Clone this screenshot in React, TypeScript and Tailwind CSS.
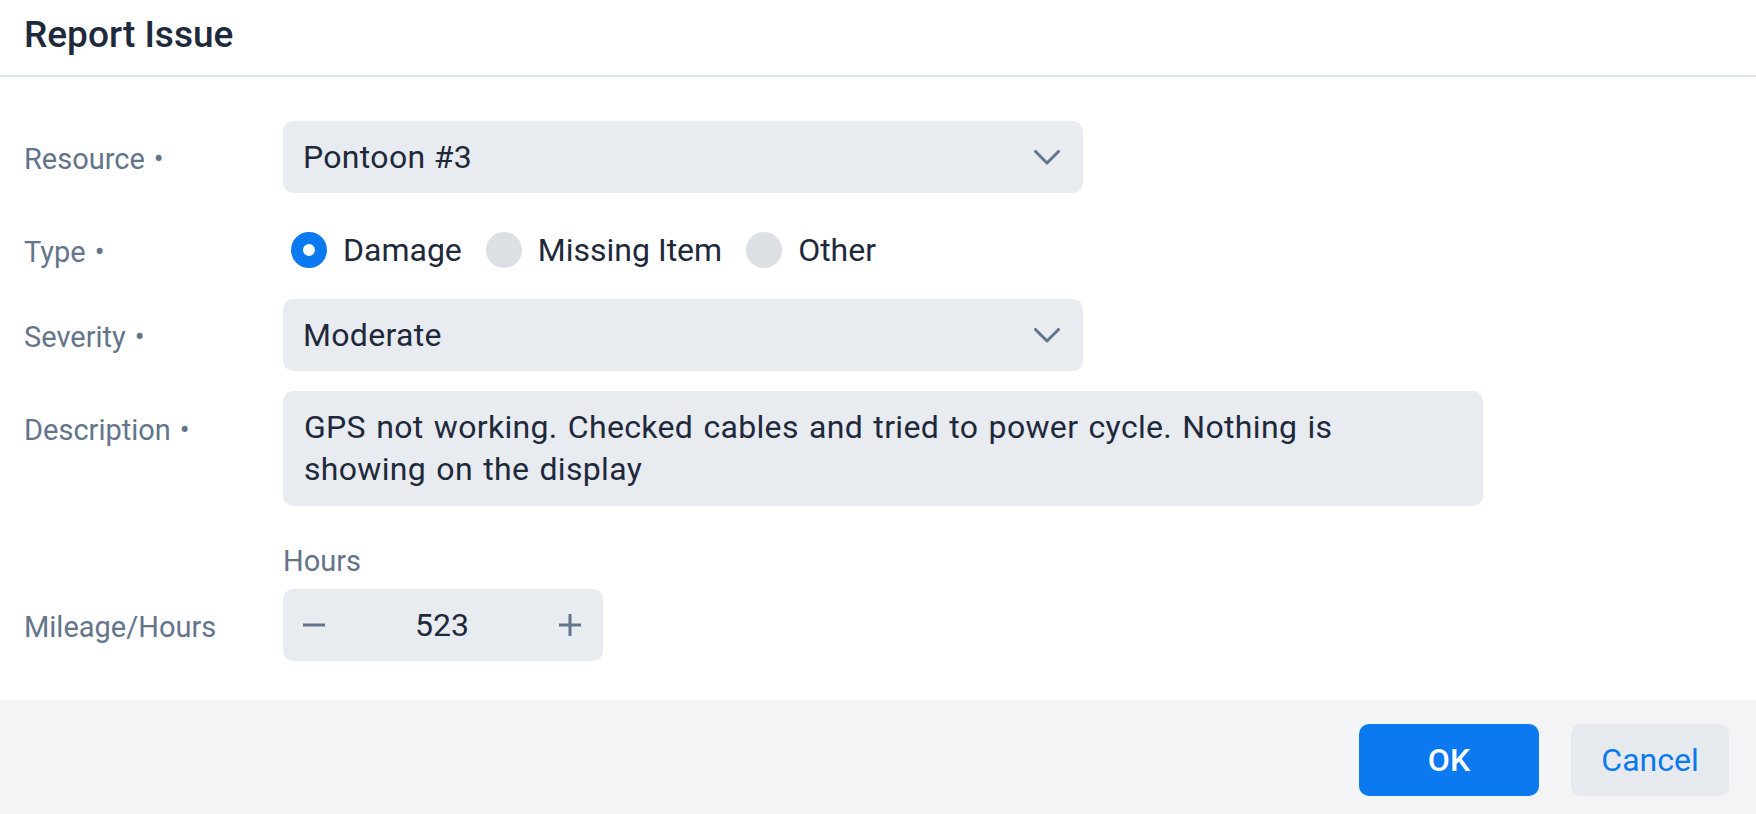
import { useState } from "react";

// Dialog is drawn at 2x (retina) scale to match the reference capture.
const LABEL_W = "w-[259px]";

function Chevron() {
  return (
    <svg width="26" height="15" viewBox="0 0 26 15" fill="none" aria-hidden>
      <path
        d="M1.5 1.5 L13 13 L24.5 1.5"
        stroke="#64748b"
        strokeWidth="3"
        strokeLinecap="round"
        strokeLinejoin="round"
      />
    </svg>
  );
}

function Req() {
  return <span className="ml-[9px]">•</span>;
}

function FieldLabel({ children }: { children: React.ReactNode }) {
  return (
    <div className={`${LABEL_W} shrink-0 pt-1 text-[29px] leading-9 text-[#64748b]`}>
      {children}
    </div>
  );
}

function SelectBox({ value }: { value: string }) {
  return (
    <div className="flex h-[72px] w-[800px] items-center justify-between rounded-[10px] bg-[#e8ebf0] pl-5 pr-[23px]">
      <span className="text-[32px] leading-10 tracking-[0.01em] text-[#1e293b]">{value}</span>
      <Chevron />
    </div>
  );
}

function Radio({ label, checked }: { label: string; checked: boolean }) {
  return (
    <div className="flex items-center gap-4">
      {checked ? (
        <span className="block h-9 w-9 rounded-full border-[12px] border-[#0b79ef] bg-white" />
      ) : (
        <span className="block h-9 w-9 rounded-full bg-[#dce0e5]" />
      )}
      <span className="text-[32px] leading-10 text-[#1e293b]">{label}</span>
    </div>
  );
}

export default function App() {
  const [hours, setHours] = useState(523);

  return (
    <div className="flex h-[814px] flex-col bg-white font-['Roboto','Liberation_Sans',sans-serif]">
      <header className="h-[77px] shrink-0 border-b-2 border-[#e2e6ea] px-6 pt-[16px]">
        <h1 className="text-[37px] font-medium leading-none text-[#1e293b]">Report Issue</h1>
      </header>

      <div className="flex flex-col px-6 pt-[44px]">
        <div className="flex items-center">
          <FieldLabel>
            Resource<Req />
          </FieldLabel>
          <SelectBox value="Pontoon #3" />
        </div>

        <div className="mt-[39px] flex h-9 items-center">
          <FieldLabel>
            Type<Req />
          </FieldLabel>
          <div className="ml-2 flex items-center gap-6">
            <Radio label="Damage" checked />
            <Radio label="Missing Item" checked={false} />
            <Radio label="Other" checked={false} />
          </div>
        </div>

        <div className="mt-[31px] flex items-center">
          <FieldLabel>
            Severity<Req />
          </FieldLabel>
          <SelectBox value="Moderate" />
        </div>

        <div className="mt-5 flex items-start">
          <div className={`${LABEL_W} shrink-0 pt-[21px] text-[29px] leading-9 text-[#64748b]`}>
            Description<Req />
          </div>
          <div className="w-[1200px] rounded-[10px] bg-[#e8ebf0] px-[21px] py-4 text-[32px] leading-[1.3] tracking-[0.01em] text-[#1e293b] [word-spacing:2px]">
            GPS not working. Checked cables and tried to power cycle. Nothing is
            <br />
            showing on the display
          </div>
        </div>

        <div className="mt-[37px] flex items-end">
          <div className={`${LABEL_W} flex h-[72px] shrink-0 items-center pt-1 text-[29px] leading-9 text-[#64748b]`}>
            Mileage/Hours
          </div>
          <div className="flex flex-col">
            <span className="text-[29px] leading-9 text-[#64748b]">Hours</span>
            <div className="mt-[10px] flex h-[72px] w-[320px] items-center justify-between rounded-[10px] bg-[#e8ebf0] pl-5 pr-[22px]">
              <button type="button" onClick={() => setHours((h) => h - 1)} aria-label="Decrease">
                <svg width="22" height="22" viewBox="0 0 22 22" aria-hidden>
                  <path d="M0 11 H22" stroke="#64748b" strokeWidth="3" />
                </svg>
              </button>
              <span className="text-[32px] leading-10 text-[#1e293b]">{hours}</span>
              <button type="button" onClick={() => setHours((h) => h + 1)} aria-label="Increase">
                <svg width="22" height="22" viewBox="0 0 22 22" aria-hidden>
                  <path d="M0 11 H22 M11 0 V22" stroke="#64748b" strokeWidth="3" />
                </svg>
              </button>
            </div>
          </div>
        </div>
      </div>

      <footer className="mt-[39px] flex flex-1 items-start justify-end gap-8 bg-[#f3f4f6] pr-[27px] pt-6">
        <button
          type="button"
          className="h-[72px] w-[180px] rounded-[10px] bg-[#0b79ef] text-[32px] font-medium text-white"
        >
          OK
        </button>
        <button
          type="button"
          className="h-[72px] w-[158px] rounded-[10px] bg-[#e6e9ed] text-[32px] text-[#0b79ef]"
        >
          Cancel
        </button>
      </footer>
    </div>
  );
}
